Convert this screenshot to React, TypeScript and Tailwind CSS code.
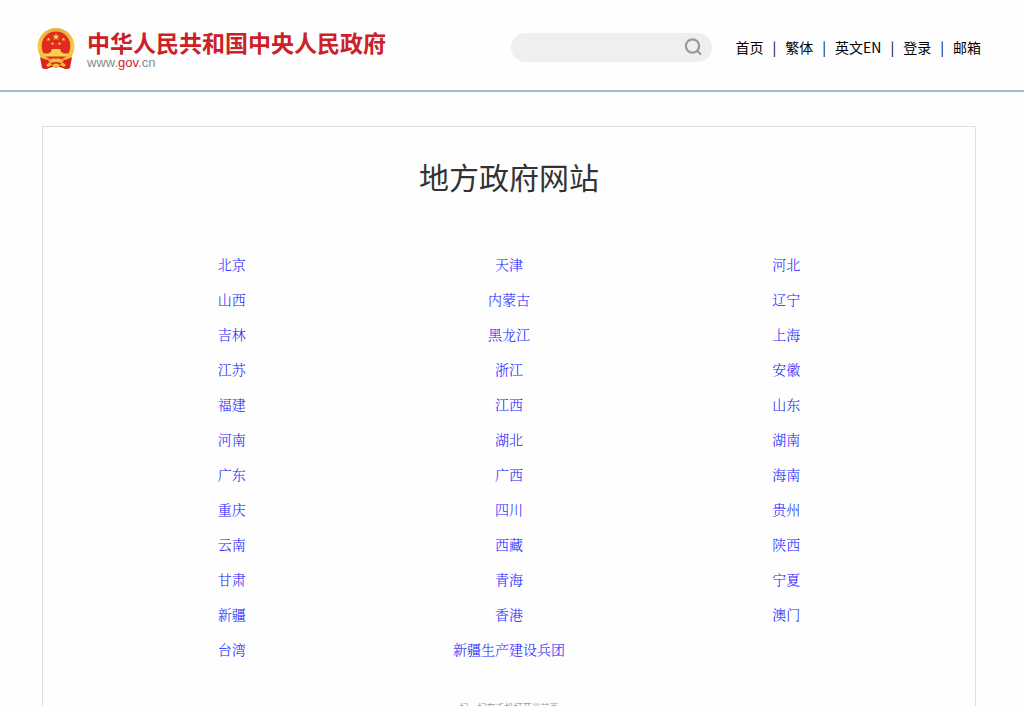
import { Fragment } from "react";

const navLinks = ["首页", "繁体", "英文EN", "登录", "邮箱"];

const regions = [
  ["北京", "天津", "河北"],
  ["山西", "内蒙古", "辽宁"],
  ["吉林", "黑龙江", "上海"],
  ["江苏", "浙江", "安徽"],
  ["福建", "江西", "山东"],
  ["河南", "湖北", "湖南"],
  ["广东", "广西", "海南"],
  ["重庆", "四川", "贵州"],
  ["云南", "西藏", "陕西"],
  ["甘肃", "青海", "宁夏"],
  ["新疆", "香港", "澳门"],
  ["台湾", "新疆生产建设兵团"],
];

function Emblem() {
  return (
    <svg viewBox="0 0 38 42" className="h-[42px] w-[38px] shrink-0" aria-hidden="true">
      <defs>
        <linearGradient id="gold" x1="0" y1="0" x2="0" y2="1">
          <stop offset="0" stopColor="#e6ad3a" />
          <stop offset="0.5" stopColor="#f6cf45" />
          <stop offset="1" stopColor="#eab02c" />
        </linearGradient>
        <path id="star" d="M0 -1L0.23 -0.31L0.95 -0.31L0.36 0.12L0.59 0.81L0 0.38L-0.59 0.81L-0.36 0.12L-0.95 -0.31L-0.23 -0.31Z" />
      </defs>
      <path d="M6 29L5 39Q8 42 12 40L19 38L26 40Q30 42 33 39L32 29Z" fill="#d9251c" />
      <circle cx="19" cy="18.5" r="18.5" fill="url(#gold)" />
      <circle cx="19" cy="18" r="14.4" fill="#e02c20" />
      <g fill="#f8d04a">
        <use href="#star" transform="translate(19 9) scale(3.8)" />
        <use href="#star" transform="translate(11.5 11.5) scale(2.2)" />
        <use href="#star" transform="translate(15.5 15.5) scale(2)" />
        <use href="#star" transform="translate(22.5 15.5) scale(2)" />
        <use href="#star" transform="translate(26.5 11.5) scale(2.2)" />
        <path d="M15 21H23L24.5 24.5H26V25.5H32L30 28.5H8L6 25.5H12V24.5H13.5Z" />
      </g>
      <path d="M3 29Q9 33 14 32L19 30L24 32Q29 33 35 29L33 40Q30 42 26 40L23 38H15L12 40Q8 42 5 40Z" fill="#d9251c" />
      <path d="M11 33Q16 29 19 31Q22 29 27 33L23 35Q19 33 15 35ZM9 37L13 34L15 37L11 39ZM29 37L25 34L23 37L27 39ZM15 37Q19 34 23 37L21 40H17Z" fill="#f1bd37" />
    </svg>
  );
}

function SearchBox() {
  return (
    <form className="flex h-[29px] w-[201px] items-center rounded-full bg-[#efefef] pr-[10px] pl-4">
      <input type="text" aria-label="搜索" className="min-w-0 flex-1 bg-transparent text-sm outline-none" />
      <button type="button" aria-label="搜索">
        <svg viewBox="0 0 18 18" className="size-[18px]" fill="none" stroke="#999" strokeWidth="2.2">
          <circle cx="8.5" cy="8" r="6.6" />
          <path d="M13 12.7L16.4 16" strokeLinecap="round" />
        </svg>
      </button>
    </form>
  );
}

export default function App() {
  return (
    <div className="h-[calc(100vh-6px)] overflow-hidden bg-[#fefefe] font-['Noto_Sans_CJK_SC',sans-serif]">
      <header className="flex h-[92px] items-center justify-between border-b-2 border-[#a3bad2] pt-1 pr-[43px] pl-[37px]">
        <a href="#" className="flex items-center gap-3 pt-1">
          <Emblem />
          <span className="flex flex-col pb-px">
            <span className="text-[23px] leading-[28px] font-bold text-[#cb2128]">中华人民共和国中央人民政府</span>
            <span className="font-['Liberation_Sans',sans-serif] text-[13px] leading-[14px] text-[#8b8b8b]">
              www.<span className="text-[#cb2128]">gov</span>.cn
            </span>
          </span>
        </a>
        <div className="flex items-center gap-6">
          <SearchBox />
          <nav className="flex items-center gap-[9px] text-sm text-black">
            {navLinks.map((label, i) => (
              <Fragment key={label}>
                {i > 0 && <span>|</span>}
                <a href="#">{label}</a>
              </Fragment>
            ))}
          </nav>
        </div>
      </header>

      <main className="mt-[34px] mr-12 ml-[42px] border border-[#e1e1e1] px-[50px] pt-[27px] pb-10">
        <h1 className="text-center text-[30px] leading-[44px] text-[#333]">地方政府网站</h1>
        <table className="mt-[50px] w-full table-fixed text-center font-['Liberation_Serif','Noto_Serif_CJK_SC','Noto_Sans_CJK_SC',serif] text-sm font-light">
          <tbody>
            {regions.map((row) => (
              <tr key={row[0]} className="h-[35px]">
                {row.map((name) => (
                  <td key={name}>
                    <a href="#" className="text-[#1a1aff]">{name}</a>
                  </td>
                ))}
              </tr>
            ))}
          </tbody>
        </table>
        <p className="mt-8 text-center text-[9px] leading-4 text-[#999]">扫一扫在手机打开当前页</p>
      </main>
    </div>
  );
}
